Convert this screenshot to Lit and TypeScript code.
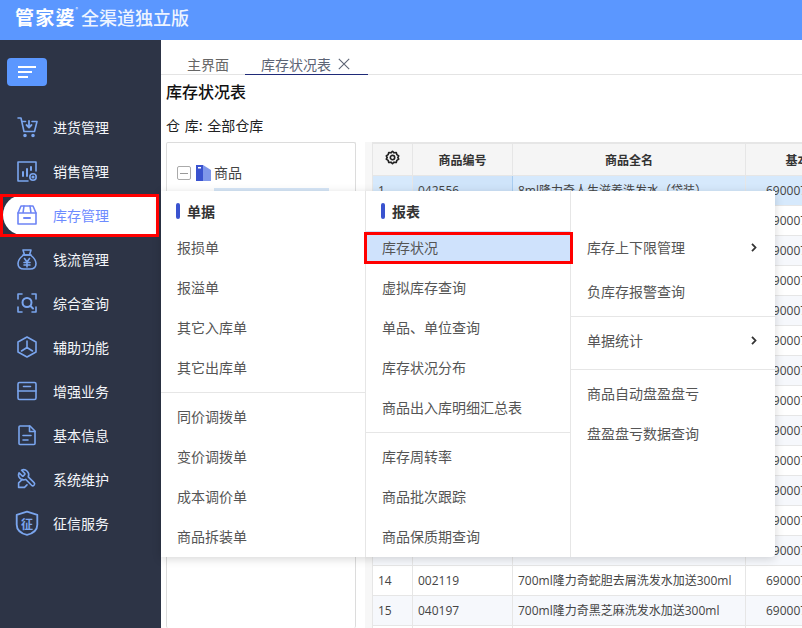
import { LitElement, html, css, svg } from "lit";
import { customElement } from "lit/decorators.js";

const S = (body: unknown) => html`<svg class="ico" viewBox="0 0 24 24" fill="none" stroke="currentColor" stroke-width="1.6" stroke-linejoin="round" stroke-linecap="round">${body}</svg>`;

const icons: Record<string, unknown> = {
  cart: S(svg`<path d="M3 3h3l3 13.500h10.500L22 6.500H17"/><path d="M7 6.500h3.500"/><circle cx="10" cy="20.500" r="1" fill="currentColor"/><circle cx="18" cy="20.500" r="1" fill="currentColor"/><path d="M14 6v6M11.500 10l2.500 2.500 2.500-2.500" stroke-width="1.800"/>`),
  chart: S(svg`<path d="M21 12V3H3v19h10"/><path d="M8 17v-4M12 17v-7M16 11V8" stroke-width="2"/><circle cx="18" cy="18" r="3.200"/><circle cx="18" cy="18" r=".8" fill="currentColor"/>`),
  box: S(svg`<path d="M3 10l3-7h12l3 7v11H3z"/><path d="M3 10h18M9 3l-1 7M15 3l1 7"/><path d="M9 15h6" stroke-width="2"/>`),
  money: S(svg`<path d="M8.500 8C6 10 3 13 3 16.500 3 20 5.500 22 9 22h6c3.500 0 6-2 6-5.500C21 13 18 10 15.500 8"/><path d="M8 3h8l-1.500 5h-5z"/><path d="M8 8h8"/><path d="M9.500 11.500L12 15l2.500-3.500M9 15.500h6M9 18h6M12 15v5"/>`),
  scan: S(svg`<path d="M7 3H3v5M17 3h4v5M3 16v5h4M21 16v5h-4"/><circle cx="12" cy="11.500" r="4.500" stroke-width="2"/><path d="M15.500 15l2.500 2.500" stroke-width="2"/>`),
  hex: S(svg`<path d="M12 2l9 5v10l-9 5-9-5V7z"/><path d="M12 6v6.500M12 12.500L6.500 16M12 12.500l5.500 3.500"/>`),
  card: S(svg`<rect x="3" y="3.500" width="18" height="17" rx="1.500"/><path d="M3 12h18M8.500 7.500h7"/>`),
  doc: S(svg`<path d="M5 3h10l5 5v12.500a1 1 0 0 1-1 1H5a1 1 0 0 1-1-1V4a1 1 0 0 1 1-1z"/><path d="M14.500 3v5.500H20M8 12.500h8M8 17h5"/>`),
  tool: S(svg`<g transform="translate(12,12) scale(.84) translate(-12,-12)" stroke-width="1.900"><g transform="translate(24,0) scale(-1,1)"><path d="M14.700 6.300a1 1 0 0 0 0 1.400l1.600 1.600a1 1 0 0 0 1.400 0l3.770-3.770a6 6 0 0 1-7.940 7.940l-6.910 6.910a2.120 2.120 0 0 1-3-3l6.910-6.910a6 6 0 0 1 7.940-7.940l-3.760 3.760z" transform="translate(0,-1)"/></g><path d="M6.500 12.500L2 16.500V22h7l3-3"/></g>`),
};

const side = [
  ["cart", "进货管理"], ["chart", "销售管理"], ["box", "库存管理"], ["money", "钱流管理"], ["scan", "综合查询"],
  ["hex", "辅助功能"], ["card", "增强业务"], ["doc", "基本信息"], ["tool", "系统维护"], ["shield", "征信服务"],
];

type Row = [string, string, string];
const rows: Row[] = [
  ["1", "042556", "8ml隆力奇人生滋养洗发水（袋装）"],
  ["2", "042557", "8ml隆力奇人生滋养护发素（袋装）"],
  ["3", "042558", "8ml隆力奇蛇胆洗发水（袋装）"],
  ["4", "002101", "200ml隆力奇蛇胆洗发水"],
  ["5", "002102", "400ml隆力奇蛇胆洗发水"],
  ["6", "002103", "750ml隆力奇蛇胆洗发水"],
  ["7", "002104", "200ml隆力奇护发素"],
  ["8", "002105", "400ml隆力奇护发素"],
  ["9", "002106", "750ml隆力奇护发素"],
  ["10", "002115", "700ml隆力奇滋养洗发水"],
  ["11", "002116", "700ml隆力奇去屑洗发水"],
  ["12", "002117", "700ml隆力奇柔顺洗发水"],
  ["13", "002118", "700ml隆力奇蛇胆去屑洗发水"],
  ["14", "002119", "700ml隆力奇蛇胆去屑洗发水加送300ml"],
  ["15", "040197", "700ml隆力奇黑芝麻洗发水加送300ml"],
  ["16", "040198", "700ml隆力奇黑芝麻护发素"],
];

const chev = html`<svg class="chev" viewBox="0 0 6 9" fill="none" stroke="currentColor" stroke-width="1.800"><path d="M1 .8l3.500 3.700L1 8.200"/></svg>`;

@customElement("app-root")
export class AppRoot extends LitElement {
  static styles = css`
    :host { display: block; width: 802px; height: 628px; overflow: hidden; position: relative; background: #fff;
      font-family: "Noto Sans CJK SC", "Liberation Sans", sans-serif; color: #333; }
    .top { height: 40px; background: #5b97ff; color: #fff; display: flex; align-items: center; padding: 0 15px; gap: 4px; box-sizing: border-box; }
    .brand { font-size: 19px; font-weight: 700; letter-spacing: 1.200px; line-height: 40px; padding-bottom: 6px; }
    .reg { font-size: 5px; align-self: flex-start; margin: 5px 0 0 -4px; }
    .sub { font-size: 18px; font-weight: 500; line-height: 40px; padding-bottom: 6px; margin-left: -1px; color: #eef4ff; }
    .body { display: flex; height: 588px; }
    .side { width: 161px; flex: none; background: #2d3446; box-sizing: border-box; padding: 18px 0 0; color: #fff; }
    .burger { width: 40px; height: 28px; margin-left: 7px; border-radius: 4px; background: #5b97ff; display: flex; flex-direction: column; justify-content: center; gap: 3px; padding-left: 11px; box-sizing: border-box; margin-bottom: 19px; }
    .burger i { display: block; height: 2px; background: #fff; }
    .burger i:nth-child(1) { width: 18px; } .burger i:nth-child(2) { width: 14px; } .burger i:nth-child(3) { width: 10px; }
    .item { height: 44px; display: flex; align-items: center; font-size: 14px; color: #f4f6fa; box-sizing: border-box; padding-left: 15px; gap: 14px; }
    .item .icw { width: 24px; height: 24px; flex: none; color: #7aa5ee; display: flex; }
    .ico { width: 100%; height: 100%; display: block; }
    .item.on { color: #6d8bff; position: relative; }
    .item.on::before { content: ""; position: absolute; left: 3px; right: 3px; top: 2px; bottom: 2px; background: #fff; border-radius: 20px 0 0 20px; }
    .item.on > * { position: relative; }
    .item.on .icw { color: #6d84f5; }
    .item .icw.big { width: 26px; height: 26px; margin: 0 -1px; position: relative; }
    .shield-t { position: absolute; inset: 0; display: flex; align-items: center; justify-content: center; font-size: 12px; font-weight: 700; color: #7aa5ee; }
    .main { flex: 1; min-width: 0; display: flex; flex-direction: column; }
    .tabs { height: 35px; display: flex; align-items: flex-end; border-bottom: 1px solid #e4e4e4; padding-left: 4px; box-sizing: border-box; font-size: 14px; color: #666; }
    .tab { height: 34px; display: flex; align-items: center; line-height: 20px; padding-top: 12px; box-sizing: border-box; margin-bottom: -1px; }
    .tab.a { width: 80px; padding-left: 22px; }
    .tab.b { width: 123px; border-bottom: 1px solid #1f2a78; gap: 7px; color: #5d6475; padding-left: 16px; }
    .x { width: 12px; height: 12px; }
    .title { font-size: 16px; font-weight: 500; color: #111; margin: 4px 0 0 5px; line-height: 24px; }
    .wh { font-size: 14px; color: #222; margin: 12px 0 0 5px; line-height: 20px; word-spacing: 1.500px; }
    .panes { flex: 1; display: flex; margin: 7px 0 0 5px; min-height: 0; }
    .tree { width: 190px; flex: none; border: 1px solid #dcdcdc; border-radius: 2px; border-bottom: none; box-sizing: border-box; padding: 20px 0 0 10px; font-size: 14px; }
    .node { display: flex; align-items: center; gap: 3px; height: 20px; color: #444; }
    .node span.lbl { margin-top: -2px; }
    .minus { width: 14px; height: 14px; border: 1px solid #aaa; border-radius: 2px; box-sizing: border-box; display: flex; align-items: center; justify-content: center; margin-right: 2px; }
    .minus::after { content: ""; width: 8px; height: 1px; background: #999; }
    .folder { width: 15px; height: 16px; display: block; }
    .sel { margin: 5px 26px 0 37px; height: 20px; background: #d6e6f7; }
    .split { width: 16px; flex: none; background: linear-gradient(90deg, #fff 58%, #f7f7f7 58%); }
    .grid { flex: 1; min-width: 0; overflow: hidden; }
    table { border-collapse: collapse; table-layout: fixed; width: 501px; font-size: 12px; font-family: "Open Sans", "Noto Sans CJK SC", sans-serif; border-top: 2px solid #e6e6e6; border-left: 1px solid #e6e6e6; }
    col.c1 { width: 40px; } col.c2 { width: 100px; } col.c3 { width: 233px; } col.c4 { width: 128px; }
    th, td { height: 30px; padding: 1px 5px 0; box-sizing: border-box; border: 1px solid #e6e6e6; white-space: nowrap; overflow: hidden; font-weight: 400; line-height: 20px; }
    th { height: 32px; background: #f5f5f5; font-weight: 700; color: #333; text-align: center; font-family: "Noto Sans CJK SC", sans-serif; }
    td { color: #444; }
    td.num { padding-left: 20px; }
    tr.alt td { background: #f6f8fc; }
    tr.cur td { background: #d6e9fc; }
    tr.cur td.focus { background: #cfe4fa; border-color: #a9cdf0; }
    th.gear { padding: 0; color: #222; }
    .gearsvg { width: 15px; height: 15px; display: block; margin: 0 auto 3px; }
    .menu { position: absolute; left: 161px; top: 191px; width: 614px; height: 366px; background: #fff; display: flex; box-shadow: 0 2px 10px rgba(0,0,0,.16); border-radius: 0 0 4px 0; font-size: 14px; color: #555; }
    .col { width: 205px; box-sizing: border-box; border-right: 1px solid #e6e6e6; display: flex; flex-direction: column; }
    .col:last-child { border-right: none; width: 204px; }
    .col.third { padding-top: 34px; }
    .hd { height: 36px; display: flex; align-items: center; gap: 7px; padding: 3px 0 0 15px; box-sizing: border-box; font-size: 14px; font-weight: 700; color: #333; flex: none; }
    .hd::before { content: ""; width: 4px; height: 16px; border-radius: 2px; background: #3a53cf; }
    .mi { height: 40px; flex: none; display: flex; align-items: center; padding: 0 18px 0 16px; justify-content: space-between; box-sizing: border-box; }
    .mi.cur { background: #cfe2fc; height: 32px; margin: 4px 0; }
    .col.third .mi { height: 44px; }
    .col.third .mi.s { height: 40px; }
    .dv { height: 1px; background: #e6e6e6; flex: none; margin: 5px 0 3px; }
    .col.third .dv { margin: 3px 0; }
    .col.third .dv.b { margin: 9px 0 3px; }
    .chev { width: 6px; height: 9px; color: #333; }
    .mark { position: absolute; border: 3px solid #f00; box-sizing: border-box; pointer-events: none; }
    .m1 { left: 0; top: 194px; width: 159px; height: 43px; }
    .m2 { left: 364px; top: 232px; width: 209px; height: 32px; }
  `;

  render() {
    return html`
      <div class="top"><span class="brand">管家婆</span><span class="reg">®</span><span class="sub">全渠道独立版</span></div>
      <div class="body">
        <nav class="side">
          <div class="burger"><i></i><i></i><i></i></div>
          ${side.map(([k, t]) => html`<div class="item ${k === "box" ? "on" : ""}">
            ${k === "shield"
              ? html`<span class="icw big">${S(svg`<path d="M12 1.500l9.500 3v9c0 4.500-4 8-9.500 9.500C6.500 21.500 2.500 18 2.500 13.500v-9z" stroke-width="1.700"/>`)}<span class="shield-t">征</span></span>`
              : html`<span class="icw">${icons[k]}</span>`}
            <span>${t}</span></div>`)}
        </nav>
        <main class="main">
          <div class="tabs">
            <div class="tab a">主界面</div>
            <div class="tab b">库存状况表<svg class="x" viewBox="0 0 12 12" stroke="currentColor" fill="none" stroke-width="1.100"><path d="M.8.8l10.400 10.400M11.200.8L.8 11.200"/></svg></div>
          </div>
          <div class="title">库存状况表</div>
          <div class="wh">仓 库: 全部仓库</div>
          <div class="panes">
            <div class="tree">
              <div class="node"><span class="minus"></span>
                <svg class="folder" viewBox="0 0 15 16"><path d="M0 0h7l8 5v11H0z" fill="#7f97ea"/><path d="M0 0h7v16H0z" fill="#3a53cf"/><rect x="2" y="2" width="3" height="1.500" fill="#fff"/></svg>
                <span class="lbl">商品</span></div>
              <div class="sel"></div>
            </div>
            <div class="split"></div>
            <div class="grid">
              <table>
                <colgroup><col class="c1"/><col class="c2"/><col class="c3"/><col class="c4"/></colgroup>
                <thead><tr>
                  <th class="gear"><svg class="gearsvg" viewBox="0 0 24 24" fill="none" stroke="currentColor" stroke-width="2.600" stroke-linejoin="round"><path d="M12 2l2.500 2.500 3.500-.5 1 3.500 3 2-1.500 2.500 1.500 2.500-3 2-1 3.500-3.500-.5L12 22l-2.500-2.500-3.500.5-1-3.500-3-2L3.500 12 2 9.500l3-2L6 4l3.500.5z"/><circle cx="12" cy="12" r="3.500"/></svg></th>
                  <th>商品编号</th><th>商品全名</th><th>基本条码</th>
                </tr></thead>
                <tbody>
                  ${rows.map((r, i) => html`<tr class="${i === 0 ? "cur" : i % 2 === 0 ? "alt" : ""}">
                    <td>${r[0]}</td><td class="${i === 0 ? "focus" : ""}">${r[1]}</td><td>${r[2]}</td><td class="num">6900071042${String(556 + i)}</td></tr>`)}
                </tbody>
              </table>
            </div>
          </div>
        </main>
      </div>
      <div class="menu">
        <div class="col">
          <div class="hd">单据</div>
          <div class="mi">报损单</div><div class="mi">报溢单</div><div class="mi">其它入库单</div><div class="mi">其它出库单</div>
          <div class="dv"></div>
          <div class="mi">同价调拨单</div><div class="mi">变价调拨单</div><div class="mi">成本调价单</div><div class="mi">商品拆装单</div>
        </div>
        <div class="col">
          <div class="hd">报表</div>
          <div class="mi cur">库存状况</div><div class="mi">虚拟库存查询</div><div class="mi">单品、单位查询</div><div class="mi">库存状况分布</div><div class="mi">商品出入库明细汇总表</div>
          <div class="dv"></div>
          <div class="mi">库存周转率</div><div class="mi">商品批次跟踪</div><div class="mi">商品保质期查询</div>
        </div>
        <div class="col third">
          <div class="mi">库存上下限管理${chev}</div>
          <div class="mi">负库存报警查询</div>
          <div class="dv"></div>
          <div class="mi s">单据统计${chev}</div>
          <div class="dv b"></div>
          <div class="mi s">商品自动盘盈盘亏</div>
          <div class="mi s">盘盈盘亏数据查询</div>
        </div>
      </div>
      <div class="mark m1"></div>
      <div class="mark m2"></div>
    `;
  }
}
